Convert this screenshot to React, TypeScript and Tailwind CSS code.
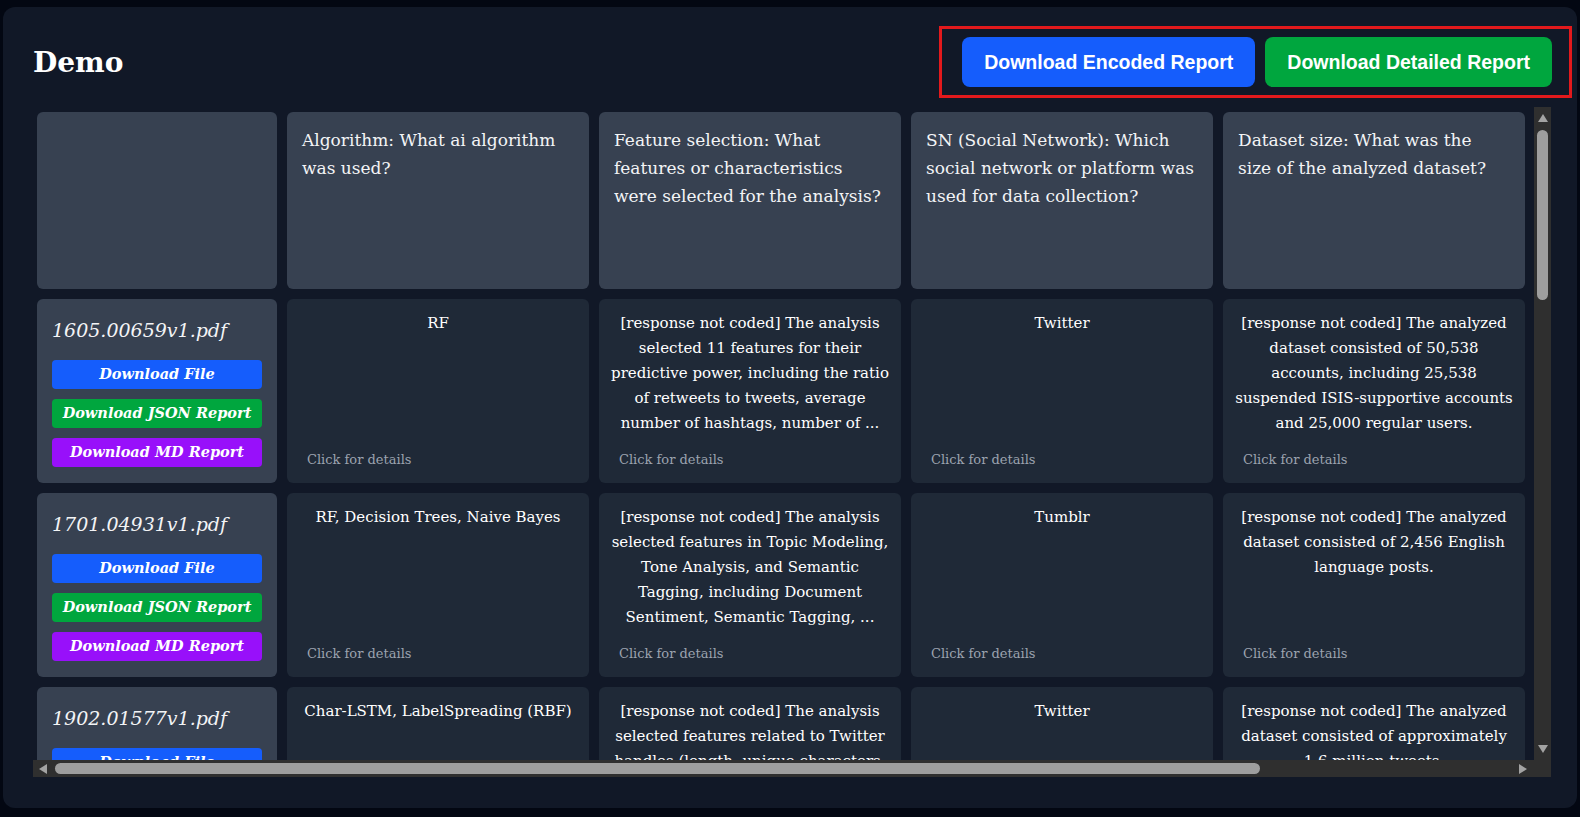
import React from 'react';

const questions = [
  'Algorithm: What ai algorithm was used?',
  'Feature selection: What features or characteristics were selected for the analysis?',
  'SN (Social Network): Which social network or platform was used for data collection?',
  'Dataset size: What was the size of the analyzed dataset?',
  'Results: What were the main findings reported by the study?',
];

const papers = [
  {
    file: '1605.00659v1.pdf',
    answers: [
      'RF',
      '[response not coded] The analysis selected 11 features for their predictive power, including the ratio of retweets to tweets, average number of hashtags, number of ...',
      'Twitter',
      '[response not coded] The analyzed dataset consisted of 50,538 accounts, including 25,538 suspended ISIS-supportive accounts and 25,000 regular users.',
      '[response not coded] The classifier was able to predict account suspension with high accuracy using ...',
    ],
  },
  {
    file: '1701.04931v1.pdf',
    answers: [
      'RF, Decision Trees, Naive Bayes',
      '[response not coded] The analysis selected features in Topic Modeling, Tone Analysis, and Semantic Tagging, including Document Sentiment, Semantic Tagging, ...',
      'Tumblr',
      '[response not coded] The analyzed dataset consisted of 2,456 English language posts.',
      '[response not coded] Extremist posts could be separated from regular posts by ...',
    ],
  },
  {
    file: '1902.01577v1.pdf',
    answers: [
      'Char-LSTM, LabelSpreading (RBF)',
      '[response not coded] The analysis selected features related to Twitter handles (length, unique characters, digits, ...',
      'Twitter',
      '[response not coded] The analyzed dataset consisted of approximately 1.6 million tweets.',
      '[response not coded] Handle-based features were enough to flag accounts ...',
    ],
  },
  {
    file: '1905.08067v2.pdf',
    answers: ['SVM, Logistic Regression', '[response not coded] Lexical and stylistic features ...', 'Twitter', '[response not coded] 17,000 tweets.', '[response not coded] ...'],
  },
  {
    file: '1908.03144v1.pdf',
    answers: ['CNN', '[response not coded] Word embeddings ...', 'Telegram', '[response not coded] 2,200 channels.', '[response not coded] ...'],
  },
  {
    file: '2001.02590v1.pdf',
    answers: ['BERT', '[response not coded] Contextual text features ...', 'Twitter', '[response not coded] 120,000 tweets.', '[response not coded] ...'],
  },
  {
    file: '2004.11522v3.pdf',
    answers: ['XGBoost', '[response not coded] Network and profile features ...', 'Reddit', '[response not coded] 9,340 users.', '[response not coded] ...'],
  },
  {
    file: '2009.07412v1.pdf',
    answers: ['LSTM, GRU', '[response not coded] Sequential posting behaviour ...', 'Twitter', '[response not coded] 430,000 tweets.', '[response not coded] ...'],
  },
  {
    file: '2103.05290v2.pdf',
    answers: ['RF, SVM', '[response not coded] Image and caption features ...', 'Instagram', '[response not coded] 6,812 posts.', '[response not coded] ...'],
  },
  {
    file: '2106.13877v1.pdf',
    answers: ['Graph Neural Network', '[response not coded] Follower graph features ...', 'Twitter', '[response not coded] 75,000 accounts.', '[response not coded] ...'],
  },
  {
    file: '2110.00915v1.pdf',
    answers: ['Naive Bayes', '[response not coded] Bag-of-words features ...', 'Facebook', '[response not coded] 3,100 comments.', '[response not coded] ...'],
  },
];

function Arrow({ dir }: { dir: 'up' | 'down' | 'left' | 'right' }) {
  const points = {
    up: '5,1 10,9 0,9',
    down: '0,1 10,1 5,9',
    left: '9,0 9,10 1,5',
    right: '1,0 1,10 9,5',
  }[dir];
  return (
    <svg width="10" height="10" viewBox="0 0 10 10" className="shrink-0">
      <polygon points={points} fill="#a3a3a3" />
    </svg>
  );
}

function FileCell({ file }: { file: string }) {
  return (
    <div className="h-[184px] rounded-md bg-[#374151] px-[15px] flex flex-col justify-center">
      <div className="text-[19px] leading-7 italic text-[#f3f4f6]">{file}</div>
      <div className="mt-4 flex flex-col gap-2.5">
        <button className="h-[29px] rounded bg-[#155dfc] text-[14.5px] font-bold italic text-white">
          Download File
        </button>
        <button className="h-[29px] rounded bg-[#00a63e] text-[14.5px] font-bold italic text-white">
          Download JSON Report
        </button>
        <button className="h-[29px] rounded bg-[#9810fa] text-[14.5px] font-bold italic text-white">
          Download MD Report
        </button>
      </div>
    </div>
  );
}

function AnswerCell({ text }: { text: string }) {
  return (
    <div className="h-[184px] rounded-md bg-[#1f2937] px-2.5 pt-3 pb-2.5 flex flex-col cursor-pointer">
      <p className="text-center text-[15px] leading-[25px] text-white">{text}</p>
      <span className="mt-auto px-2.5 pb-[3px] text-[13px] leading-5 text-[#9ca3af]">Click for details</span>
    </div>
  );
}

export default function App() {
  return (
    <div className="min-h-screen bg-[#030712] px-[3px] pt-[7px] pb-[9px] font-['DejaVu_Serif','Liberation_Serif',serif]">
      <div className="rounded-xl bg-[#111827] pl-[30px] pr-[5px] pt-[19px] pb-[31px]">
        {/* Header */}
        <div className="flex items-center justify-between mb-[9px]">
          <h1 className="pt-0.5 text-[28px] font-bold text-white">Demo</h1>
          <div className="flex gap-2.5 border-[3px] border-[#e3191c] pl-5 pr-[17px] py-2">
            <button className="h-[50px] rounded-lg bg-[#155dfc] px-[22px] pt-0.5 font-['Liberation_Sans',Arial,sans-serif] text-[19.5px] font-bold text-white">
              Download Encoded Report
            </button>
            <button className="h-[50px] rounded-lg bg-[#00a63e] px-[22px] pt-0.5 font-['Liberation_Sans',Arial,sans-serif] text-[19.5px] font-bold text-white">
              Download Detailed Report
            </button>
          </div>
        </div>

        {/* Results table with its scrollbars */}
        <div className="mr-[21px] h-[670px] flex flex-col">
          <div className="flex flex-1 min-h-0">
            <div className="flex-1 min-w-0 overflow-hidden">
              <div className="grid w-max grid-cols-[240px_repeat(5,302px)] gap-2.5 px-1 pt-[5px] pb-1">
                <div className="h-[177px] rounded-md bg-[#374151]" />
                {questions.map((q) => (
                  <div key={q} className="h-[177px] rounded-md bg-[#374151] px-[15px] pt-3.5 text-[17px] leading-7 text-[#f3f4f6]">
                    {q}
                  </div>
                ))}
                {papers.map((paper) => (
                  <React.Fragment key={paper.file}>
                    <FileCell file={paper.file} />
                    {paper.answers.map((a, i) => (
                      <AnswerCell key={i} text={a} />
                    ))}
                  </React.Fragment>
                ))}
              </div>
            </div>
            {/* vertical scrollbar */}
            <div className="w-[17px] bg-[#2f2f2f] flex flex-col items-center pt-[6px] pb-[6px]">
              <Arrow dir="up" />
              <div className="mt-[7px] h-[170px] w-[11px] rounded-full bg-[#9e9e9e]" />
              <div className="mt-auto">
                <Arrow dir="down" />
              </div>
            </div>
          </div>
          {/* horizontal scrollbar */}
          <div className="flex h-[17px]">
            <div className="flex-1 bg-[#2f2f2f] flex items-center pl-[5px] pr-[6px]">
              <Arrow dir="left" />
              <div className="ml-[7px] h-[11px] w-[1205px] rounded-full bg-[#9e9e9e]" />
              <div className="ml-auto">
                <Arrow dir="right" />
              </div>
            </div>
            <div className="w-[17px] bg-[#2f2f2f]" />
          </div>
        </div>
      </div>
    </div>
  );
}
